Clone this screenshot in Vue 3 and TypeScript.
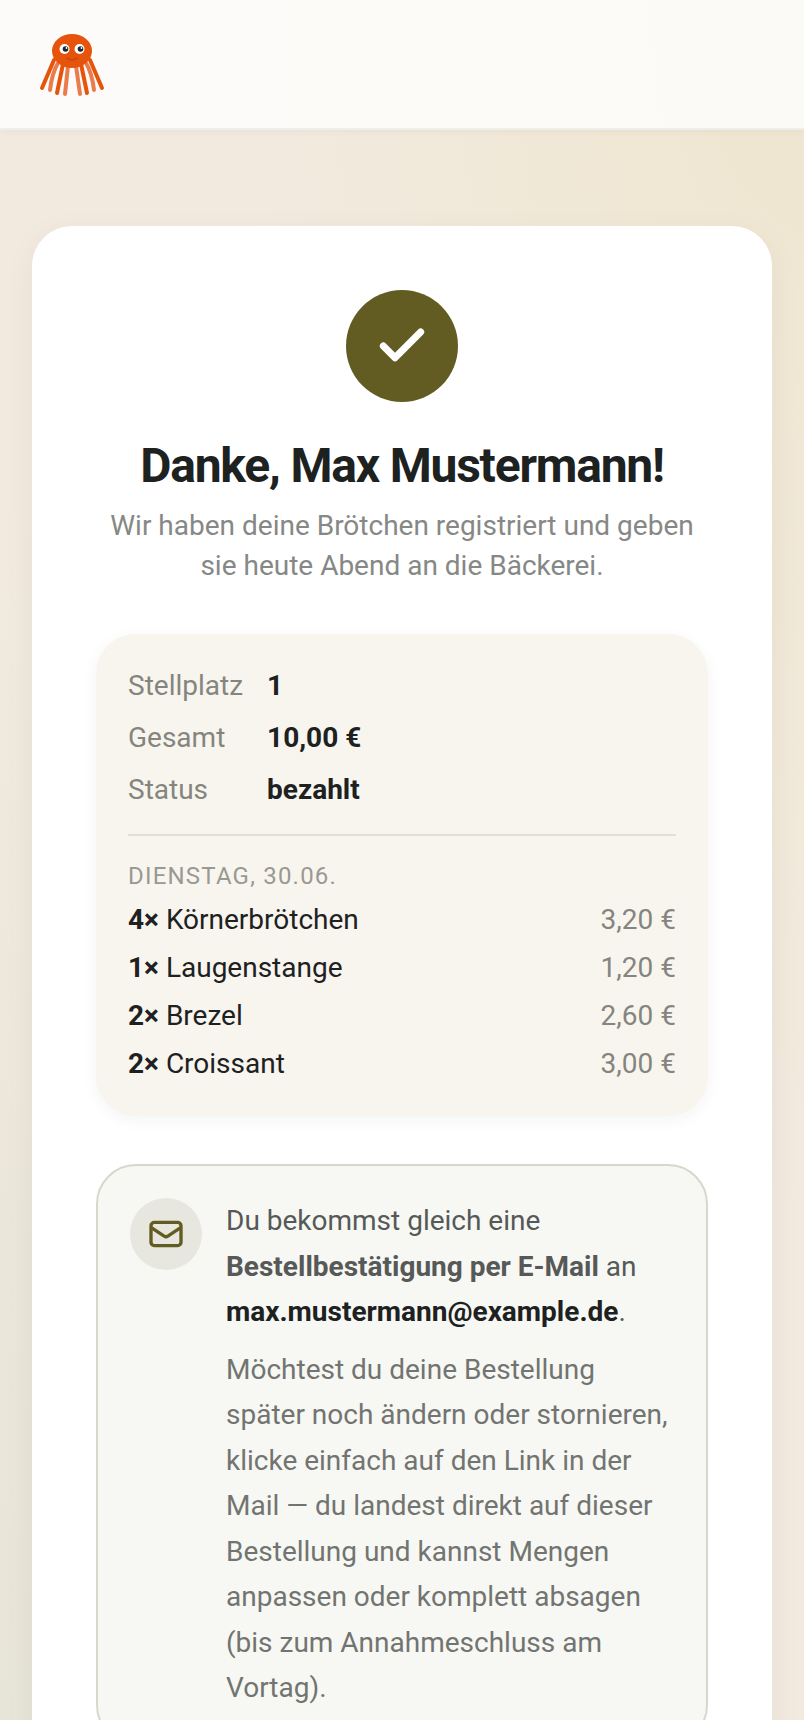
<script setup lang="ts">
interface OrderItem {
  quantity: number
  name: string
  price: number
}

const guest = { name: 'Max Mustermann', email: 'max.mustermann@example.de' }
const pitch = '1'
const status = 'bezahlt'
const day = 'Dienstag, 30.06.'
const items: OrderItem[] = [
  { quantity: 4, name: 'Körnerbrötchen', price: 3.2 },
  { quantity: 1, name: 'Laugenstange', price: 1.2 },
  { quantity: 2, name: 'Brezel', price: 2.6 },
  { quantity: 2, name: 'Croissant', price: 3.0 },
]
const total = items.reduce((sum, item) => sum + item.price, 0)
const euro = (value: number): string => value.toFixed(2).replace('.', ',') + '\u00a0€'
</script>

<template>
  <div class="page">
    <header class="topbar">
      <svg class="logo" viewBox="0 0 72 72" role="img" aria-label="Oktopus">
        <g fill="none" stroke="#e6540c" stroke-width="4" stroke-linecap="round">
          <g stroke="#ea7c4c">
            <path d="M22 35Q16 45 14 62" />
            <path d="M32 38L29 66" />
            <path d="M40 38L44 66" />
            <path d="M50 35Q56 45 58 62" />
          </g>
          <path d="M18 32L6 60" />
          <path d="M27 36L21 65" />
          <path d="M45 36L51 65" />
          <path d="M54 32L66 60" />
        </g>
        <ellipse cx="36" cy="23" rx="20" ry="17" fill="#e6540c" />
        <circle cx="28.5" cy="21" r="5" fill="#fff" />
        <circle cx="43.5" cy="21" r="5" fill="#fff" />
        <circle cx="29.5" cy="21" r="2.8" fill="#1d2433" />
        <circle cx="44.5" cy="21" r="2.8" fill="#1d2433" />
        <circle cx="30.5" cy="20" r="0.9" fill="#fff" />
        <circle cx="45.5" cy="20" r="0.9" fill="#fff" />
        <path d="M31 30Q36 34 41 30" fill="none" stroke="#c8430c" stroke-width="1.6" stroke-linecap="round" />
      </svg>
    </header>

    <main class="content">
      <section class="card">
        <div class="badge">
          <svg viewBox="0 0 24 24" aria-hidden="true"><path d="M20 6 9 17l-5-5" /></svg>
        </div>
        <h1>Danke, {{ guest.name }}!</h1>
        <p class="lead">Wir haben deine Brötchen registriert und geben sie heute Abend an die Bäckerei.</p>

        <div class="summary">
          <dl class="facts">
            <dt>Stellplatz</dt><dd>{{ pitch }}</dd>
            <dt>Gesamt</dt><dd>{{ euro(total) }}</dd>
            <dt>Status</dt><dd>{{ status }}</dd>
          </dl>
          <div class="order">
            <h2>{{ day }}</h2>
            <ul>
              <li v-for="item in items" :key="item.name">
                <span><strong>{{ item.quantity }}×</strong> {{ item.name }}</span>
                <span class="price">{{ euro(item.price) }}</span>
              </li>
            </ul>
          </div>
        </div>

        <div class="notice">
          <div class="mail">
            <svg viewBox="0 0 24 24" aria-hidden="true">
              <path d="M3 8l7.89 5.26a2 2 0 0 0 2.22 0L21 8M5 19h14a2 2 0 0 0 2-2V7a2 2 0 0 0-2-2H5a2 2 0 0 0-2 2v10a2 2 0 0 0 2 2z" />
            </svg>
          </div>
          <div class="message">
            <p>
              Du bekommst gleich eine <strong>Bestellbestätigung per E-Mail</strong> an
              <strong class="address">{{ guest.email }}</strong>.
            </p>
            <p class="hint">
              Möchtest du deine Bestellung später noch ändern oder stornieren, klicke einfach auf den
              Link in der Mail — du landest direkt auf dieser Bestellung und kannst Mengen anpassen
              oder komplett absagen (bis zum Annahmeschluss am Vortag).
            </p>
          </div>
        </div>
      </section>
    </main>
  </div>
</template>

<style>
body {
  margin: 0;
}
</style>

<style scoped>
.page {
  min-height: 100vh;
  font-family: Roboto, "Liberation Sans", sans-serif;
  font-size: 28px;
  line-height: 40px;
  color: #1d211f;
  background:
    radial-gradient(ellipse at 100% 0%, #efe6d0 0%, rgba(239, 230, 208, 0) 50%),
    radial-gradient(ellipse at 0% 100%, #e7e4d8 0%, rgba(231, 228, 216, 0) 50%),
    #f2eadf;
  background-attachment: fixed;
}

.topbar {
  padding: 28px 36px;
  background: rgba(255, 255, 255, 0.8);
  border-bottom: 2px solid rgba(29, 33, 31, 0.06);
  box-shadow: 0 2px 6px rgba(29, 33, 31, 0.04);
}

.logo {
  display: block;
  width: 72px;
  height: 72px;
}

.content {
  padding: 96px 32px;
}

.card {
  padding: 64px;
  border-radius: 40px;
  background: #fff;
  box-shadow: 0 8px 32px rgba(29, 33, 31, 0.05);
}

.badge {
  display: grid;
  place-items: center;
  width: 112px;
  height: 112px;
  margin: 0 auto;
  border-radius: 50%;
  background: #625c22;
}

.badge svg {
  width: 56px;
  height: 56px;
  fill: none;
  stroke: #fff;
  stroke-width: 3;
  stroke-linecap: round;
  stroke-linejoin: round;
}

h1 {
  margin: 32px 0 0;
  font-size: 48px;
  font-weight: 700;
  line-height: 64px;
  letter-spacing: -0.025em;
  text-align: center;
}

.lead {
  margin: 8px 0 0;
  color: #868886;
  text-align: center;
}

.summary {
  margin-top: 48px;
  padding: 32px;
  border-radius: 40px;
  background: #f8f5ee;
  box-shadow: 0 4px 16px rgba(29, 33, 31, 0.05);
}

.facts {
  display: grid;
  grid-template-columns: auto 1fr;
  gap: 12px 24px;
  margin: 0;
}

dt {
  color: #858580;
}

dd {
  margin: 0;
  font-weight: 700;
}

.order {
  margin-top: 24px;
  padding-top: 24px;
  border-top: 2px solid #e2dfd9;
}

h2 {
  margin: 0 0 8px;
  font-size: 24px;
  font-weight: 400;
  line-height: 32px;
  letter-spacing: 0.05em;
  text-transform: uppercase;
  color: #999993;
}

ul {
  display: grid;
  gap: 8px;
  margin: 0;
  padding: 0;
  list-style: none;
}

li {
  display: flex;
  justify-content: space-between;
  gap: 24px;
}

.price {
  color: #858580;
  white-space: nowrap;
}

.notice {
  display: flex;
  align-items: flex-start;
  gap: 24px;
  margin-top: 48px;
  padding: 32px;
  border: 2px solid #d7d8cc;
  border-radius: 40px;
  background: #f7f8f3;
}

.mail {
  display: grid;
  flex: none;
  place-items: center;
  width: 72px;
  height: 72px;
  border-radius: 50%;
  background: #e7e6df;
}

.mail svg {
  width: 40px;
  height: 40px;
  fill: none;
  stroke: #625c22;
  stroke-width: 2;
  stroke-linecap: round;
  stroke-linejoin: round;
}

.message {
  flex: 1;
  min-width: 0;
  line-height: 1.625;
  color: #565957;
}

.message p {
  margin: 0;
}

.message .address {
  color: #1d211f;
}

.message .hint {
  margin-top: 12px;
  color: #727471;
}
</style>
